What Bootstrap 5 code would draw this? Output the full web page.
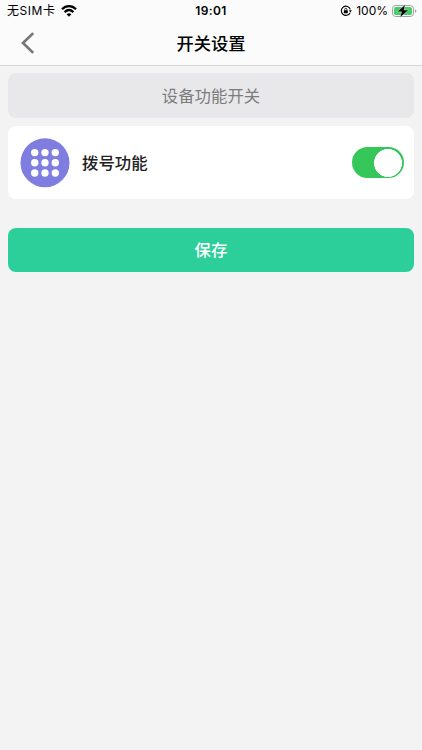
<!DOCTYPE html>
<html lang="zh-CN">
<head>
<meta charset="utf-8">
<meta name="viewport" content="width=device-width, initial-scale=1">
<title>开关设置</title>
<link href="https://cdn.jsdelivr.net/npm/bootstrap@5.3.0/dist/css/bootstrap.min.css" rel="stylesheet">
<style>
body { background: #f3f3f3; font-family: Inter, "Noto Sans CJK SC", sans-serif; color: #000; }
svg { display: block; flex: none; }
.top-area { background: #fbfbfb; border-bottom: 1px solid #d6d6d6; height: 66px; }
.status-bar { height: 22px; font-size: 12px; line-height: 22px; padding: 0 5px 0 7px; }
.status-bar > div { flex: 1 1 0; }
.carrier { letter-spacing: .55px; }
.wifi { margin-left: 5px; }
.clock { font-weight: 600; font-size: 12px; letter-spacing: .35px; margin-right: 2px; }
.title-bar { height: 43px; padding: 0 20px; }
.title-bar h1 { font-size: 17.3px; font-weight: 500; line-height: 43px; }
.side { width: 16px; }
.title-bar svg { margin-top: -2px; }
.content { padding: 7px 8px 0; }
.section-head { height: 45px; border-radius: 8px; background: #e8e8ea; color: #7c7c7c; font-size: 16.4px; padding-top: 2px; }
.setting { height: 73px; border-radius: 8px; margin-top: 8px; padding: 0 10.5px 0 12px; }
.setting-label { font-size: 16.4px; margin: 2px 0 0 12px; color: #222; font-weight: 500; }
.form-check-input.toggle { width: 52px; height: 31px; border: 0; border-radius: 16px; background-color: #35c759; margin: 0; float: none;
  background-size: 28px 28px; background-position: calc(100% - 2px) center; }
.form-check-input.toggle:checked { background-color: #35c759; background-position: calc(100% - 2px) center;
  background-image: radial-gradient(circle, #fff 13.7px, transparent 14.3px); }
.save { height: 44.5px; margin-top: 28.5px; border: 0; border-radius: 8px; background: #2ccf9a; font-size: 16.4px; font-weight: 500; padding: 1px 0 0; }
</style>
<script src="https://cdn.jsdelivr.net/npm/bootstrap@5.3.0/dist/js/bootstrap.bundle.min.js"></script>
</head>
<body>
<header class="top-area">
  <div class="status-bar d-flex align-items-center">
    <div class="d-flex align-items-center">
      <span class="carrier">无SIM卡</span>
      <svg class="wifi" width="16" height="12" viewBox="0 0 16 12" fill="none" stroke="#000" stroke-width="2.2"><path d="M1 4.3C5 .1 11 .1 15 4.3M3.6 7.1C6.3 4.5 9.7 4.5 12.4 7.1"/><path d="M8 11.8 5.6 9.2Q8 7.2 10.4 9.2Z" fill="#000" stroke="none"/></svg>
    </div>
    <span class="clock">19:01</span>
    <div class="d-flex align-items-center justify-content-end">
      <svg class="me-1" width="12" height="12" viewBox="0 0 12 12" fill="none" stroke="#000"><path d="M10.1 7.7A4.6 4.6 0 1 1 10.3 4.4" stroke-width="1.1"/><path d="M8.9 5.2h3L10.4 7.4Z" fill="#000" stroke="none"/><path d="M4.7 5.5V4.4a1.1 1.1 0 0 1 2.2 0v1.1" stroke-width=".8"/><rect x="3.8" y="5.2" width="4" height="3" rx=".5" fill="#000" stroke="none"/></svg>
      <span>100%</span>
      <svg class="ms-1" width="25" height="14" viewBox="0 0 25 14"><rect x=".5" y="1.5" width="21" height="11" rx="3.2" fill="#fff" stroke="#a0a0a0"/><rect x="2" y="3" width="18" height="8" rx="1.8" fill="#47cd65"/><path d="M23 5.2q1.4.4 1.4 1.8T23 8.8Z" fill="#a0a0a0"/><path d="M13.2.4 5.3 7.8h4.3L8 13.6 16.6 6.1H12Z" fill="#000" stroke="#fff" stroke-width=".4"/></svg>
    </div>
  </div>
  <div class="title-bar d-flex align-items-center justify-content-between">
    <svg class="side" width="16" height="22" viewBox="0 0 16 22" fill="none" stroke="#777" stroke-width="2.7"><path d="M13.2 1.1 3 11 13.2 20.9"/></svg>
    <h1 class="m-0">开关设置</h1>
    <span class="side"></span>
  </div>
</header>
<main class="content">
  <div class="section-head d-flex align-items-center justify-content-center">设备功能开关</div>
  <div class="setting d-flex align-items-center bg-white">
    <svg width="50" height="50" viewBox="0 0 50 50"><circle cx="25" cy="24.8" r="24.5" fill="#7f7ddf"/><g fill="#fff"><circle cx="14.7" cy="14.6" r="3.7"/><circle cx="25" cy="14.6" r="3.7"/><circle cx="35.3" cy="14.6" r="3.7"/><circle cx="14.7" cy="24.8" r="3.7"/><circle cx="25" cy="24.8" r="3.7"/><circle cx="35.3" cy="24.8" r="3.7"/><circle cx="14.7" cy="35" r="3.7"/><circle cx="25" cy="35" r="3.7"/><circle cx="35.3" cy="35" r="3.7"/></g></svg>
    <label class="setting-label" for="dial">拨号功能</label>
    <div class="form-check form-switch d-flex ms-auto p-0 m-0" style="min-height:0"><input class="form-check-input toggle" type="checkbox" role="switch" id="dial" checked></div>
  </div>
  <button class="save btn w-100 text-white" type="button">保存</button>
</main>
</body>
</html>
